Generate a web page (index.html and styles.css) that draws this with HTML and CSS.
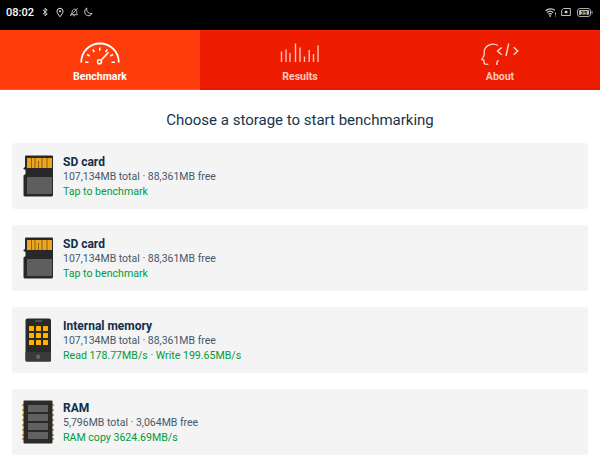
FILE: index.html
```html
<!DOCTYPE html>
<html lang="en">
<head>
<meta charset="utf-8">
<title>Benchmark</title>
<link rel="stylesheet" href="styles.css">
</head>
<body>
<div class="status">
  <div class="status-left">
    <span class="clock">08:02</span>
    <svg class="si bt" viewBox="0 0 8 12"><path d="M1 3l6 5.500L4 11V1l3 2.500L1 9" fill="none" stroke="#ddd" stroke-width="1.200"/></svg>
    <svg class="si pin" viewBox="0 0 10 12"><path d="M5 11.300C3 8.500 1.200 6.600 1.200 4.500a3.800 3.800 0 0 1 7.600 0c0 2.100-1.800 4-3.800 6.800z" fill="none" stroke="#eee" stroke-width="1.200"/><circle cx="5" cy="4.500" r="1.200" fill="#eee"/></svg>
    <svg class="si bell" viewBox="0 0 12 12"><path d="M1.500 9.200h9M2.800 9c1-1.500.6-3 1.200-4.600C4.600 3 6.500 1.800 8 3c1.300 1 1.200 3 1.500 6M5 10.500h2.200M1.500 10.800L10.500 1.200" fill="none" stroke="#ccc" stroke-width="1"/></svg>
    <svg class="si moon" viewBox="0 0 12 12"><path d="M4.500 1.200C3.800 5 6.500 8.500 10.800 7.800 9.800 10 7.500 11 5.200 10.300 1.500 9 .8 3.500 4.500 1.200z" fill="none" stroke="#ddd" stroke-width="1.100"/></svg>
  </div>
  <div class="status-right">
    <svg class="si wifi" viewBox="0 0 13 10"><path d="M.5 3C3.500.4 8.500.4 11 2.600M2 5c2-1.700 5-1.700 7 0M3.600 6.900c1-.8 2.800-.8 3.800 0" fill="none" stroke="#ccc" stroke-width="1.300"/><circle cx="5.500" cy="8.800" r="1" fill="#ccc"/><path d="M11.500 5v2.500M11.500 8.400v1" stroke="#ccc"/></svg>
    <svg class="si sim" viewBox="0 0 12 10"><path d="M3 .6h8.400v8.800H.6V3z" fill="none" stroke="#ddd" stroke-width="1.100"/><rect x="4.500" y="3.500" width="3.200" height="3" fill="#ddd"/></svg>
    <svg class="si battery" viewBox="0 0 16 9"><rect x=".5" y=".5" width="13" height="8" rx="2.500" fill="none" stroke="#aaa"/><rect x="2" y="2" width="10" height="5" rx="1" fill="#bbb"/><rect x="14.500" y="3" width="1" height="3" rx=".5" fill="#aaa"/><text class="battery-level" x="7" y="6.500" text-anchor="middle">25</text></svg>
  </div>
</div>

<nav class="tabs">
  <div class="tab tab-active">
    <svg class="tab-icon" viewBox="0 0 40 24" fill="none" stroke="#fff" stroke-width="1.500">
      <path d="M1.200 20.500C1.200 9.500 9.500 1.500 20 1.500s18.800 8 18.800 19" stroke-width="1.800"/>
      <path d="M5 20.200h3.500M31.500 20.200H35M7 12.500l2.800 1.500M33 12.500l-2.800 1.500M12.700 7.300l1.700 2.700M27.300 7.300l-1.700 2.700M19.800 5.500v3.200"/>
      <circle cx="19.500" cy="19.700" r="2" stroke-width="1.600"/>
      <path d="M21 18.300l7.500-8" stroke-width="1.600"/>
    </svg>
    <span class="tab-label">Benchmark</span>
  </div>
  <div class="tab">
    <svg class="tab-icon" viewBox="0 0 40 24" stroke="#ffc4b6" stroke-width="1.400">
      <path d="M1.500 20V9.500M6 20V7.500M10 20V11M15.500 20V1.500M20 20V5.500M24.500 20V14.500M29.200 20V8M33.500 20V12M38 20V3.500"/>
    </svg>
    <span class="tab-label">Results</span>
  </div>
  <div class="tab">
    <svg class="tab-icon" viewBox="0 0 40 24" fill="none" stroke="#ffd8d0" stroke-width="1.300">
      <path d="M18 3.500C14 .8 7.500 2 5 6.500c-1.500 2.800-.5 5-1 7L1.800 17.500 4 18.200l.1 3c.2 1.500 2 1.300 4.300 1"/>
      <path d="M18.500 18.200c-1.300 1-2 2.700-1.700 4.800"/>
      <path d="M21.700 5.500L17.500 9l4.200 3.800M28.700 1.500L26 14M33.700 5.200L37.800 9l-4.100 3.800" stroke-width="1.400"/>
    </svg>
    <span class="tab-label">About</span>
  </div>
</nav>

<main class="content">
  <h1 class="heading">Choose a storage to start benchmarking</h1>
  <div class="list">
    <div class="card">
      <svg class="device" viewBox="0 0 32 42"><path d="M3 1.500a1 1 0 0 1 1-1h26a1 1 0 0 1 1 1V40a1.500 1.500 0 0 1-1.500 1.500H3A1.500 1.500 0 0 1 1.500 40V20.500L3.500 19V15L1.500 14V13l1.500-1z" fill="#282828"/><rect x="5" y="3" width="25" height="10" fill="#eda41e"/><path d="M9.500 3v10M13 3v10M16.500 6v7M20 3v10M25 3v10" stroke="#6a5220" stroke-width=".8"/><rect x="5" y="22" width="25" height="17" fill="#5e5e5e"/></svg>
      <div class="info"><div class="name">SD card</div><div class="size">107,134MB total · 88,361MB free</div><div class="speed">Tap to benchmark</div></div>
    </div>
    <div class="card">
      <svg class="device" viewBox="0 0 32 42"><path d="M3 1.500a1 1 0 0 1 1-1h26a1 1 0 0 1 1 1V40a1.500 1.500 0 0 1-1.500 1.500H3A1.500 1.500 0 0 1 1.500 40V20.500L3.500 19V15L1.500 14V13l1.500-1z" fill="#282828"/><rect x="5" y="3" width="25" height="10" fill="#eda41e"/><path d="M9.500 3v10M13 3v10M16.500 6v7M20 3v10M25 3v10" stroke="#6a5220" stroke-width=".8"/><rect x="5" y="22" width="25" height="17" fill="#5e5e5e"/></svg>
      <div class="info"><div class="name">SD card</div><div class="size">107,134MB total · 88,361MB free</div><div class="speed">Tap to benchmark</div></div>
    </div>
    <div class="card">
      <svg class="device" viewBox="0 0 32 44"><rect x="3.500" y=".5" width="25.500" height="43" rx="2" fill="#2a2a2a"/><rect x="3.500" y="34" width="25.500" height="9.500" fill="#3a3a3a"/><rect x="13" y="2.500" width="7" height="1" fill="#777"/><circle cx="16.200" cy="38.800" r="2.200" fill="#666"/><g fill="#ffb300"><rect x="7" y="8" width="5" height="5" rx=".6"/><rect x="14" y="8" width="5" height="5" rx=".6"/><rect x="21" y="8" width="5" height="5" rx=".6"/><rect x="7" y="15" width="5" height="5" rx=".6"/><rect x="14" y="15" width="5" height="5" rx=".6"/><rect x="21" y="15" width="5" height="5" rx=".6"/><rect x="7" y="22" width="5" height="5" rx=".6"/><rect x="14" y="22" width="5" height="5" rx=".6"/><rect x="21" y="22" width="5" height="5" rx=".6"/></g></svg>
      <div class="info"><div class="name">Internal memory</div><div class="size">107,134MB total · 88,361MB free</div><div class="speed">Read 178.77MB/s · Write 199.65MB/s</div></div>
    </div>
    <div class="card">
      <svg class="device" viewBox="0 0 32 44"><g fill="#e0a030"><rect x="0" y="4" width="32" height="2"/><rect x="0" y="9" width="32" height="2"/><rect x="0" y="14" width="32" height="2"/><rect x="0" y="19" width="32" height="2"/><rect x="0" y="24" width="32" height="2"/><rect x="0" y="29" width="32" height="2"/><rect x="0" y="34" width="32" height="2"/><rect x="0" y="38" width="32" height="2"/></g><rect x="1.500" y=".5" width="29" height="43" rx="1" fill="#2a2a2a"/><g fill="#616161"><rect x="6" y="5" width="20" height="7"/><rect x="6" y="14" width="20" height="7"/><rect x="6" y="23" width="20" height="7"/><rect x="6" y="32" width="20" height="7"/></g></svg>
      <div class="info"><div class="name">RAM</div><div class="size">5,796MB total · 3,064MB free</div><div class="speed">RAM copy 3624.69MB/s</div></div>
    </div>
  </div>
</main>
</body>
</html>
```
FILE: styles.css
```css
html, body {
  margin: 0;
  padding: 0;
  height: 461px;
  overflow: hidden;
  background: #fff;
  font-family: Roboto, "Liberation Sans", sans-serif;
}
.status {
  height: 30px;
  background: #000;
  display: flex;
  align-items: center;
  justify-content: space-between;
  padding: 0 7px 6px 6px;
  box-sizing: border-box;
}
.status-left, .status-right {
  display: flex;
  align-items: center;
}
.clock {
  color: #fff;
  font-size: 11px;
  font-weight: 500;
  margin-right: 8px;
}
.si { display: block; }
.bt { width: 6px; height: 10px; margin-right: 8px; }
.pin { width: 8px; height: 11px; margin-right: 5px; }
.bell { width: 10px; height: 10px; margin-right: 4px; }
.moon { width: 10px; height: 10px; }
.wifi { width: 12px; height: 9px; margin-right: 4px; }
.sim { width: 10px; height: 8px; margin-right: 6px; }
.battery { width: 16px; height: 9px; }
.battery-level {
  fill: #000;
  font-size: 5.500px;
  font-weight: 700;
}
.tabs {
  display: flex;
  height: 60px;
  background: #ee1c00;
  box-shadow: inset 0 -2px 0 #e01a00;
}
.tab {
  flex: 1;
  display: flex;
  flex-direction: column;
  align-items: center;
  padding-top: 12px;
  box-sizing: border-box;
  color: #ffc9bd;
}
.tab-active {
  background: #ff3c0c;
  color: #fff;
  box-shadow: inset 0 -1px 0 #ff5a30;
}
.tab-icon {
  display: block;
  width: 40px;
  height: 24px;
}
.tab-label {
  font-size: 10.500px;
  font-weight: 700;
  line-height: 13px;
  margin-top: 4px;
}
.content {
  padding: 0 12px;
}
.heading {
  margin: 0;
  height: 53px;
  line-height: 60px;
  text-align: center;
  font-size: 15px;
  font-weight: 400;
  color: #17344a;
}
.list {
  display: flex;
  flex-direction: column;
  gap: 16px;
}
.card {
  height: 66px;
  box-sizing: border-box;
  background: #f4f4f4;
  border-radius: 3px;
  display: flex;
  align-items: center;
  padding-left: 10px;
}
.device {
  width: 32px;
  height: 44px;
  flex: none;
  margin-right: 9px;
}
.info {
  padding-top: 1px;
  line-height: 15px;
}
.name {
  font-size: 12px;
  font-weight: 700;
  color: #0f2f4a;
  margin-bottom: -1px;
}
.size {
  font-size: 10.500px;
  color: #44586a;
}
.speed {
  font-size: 10.600px;
  color: #009a3c;
}
```
